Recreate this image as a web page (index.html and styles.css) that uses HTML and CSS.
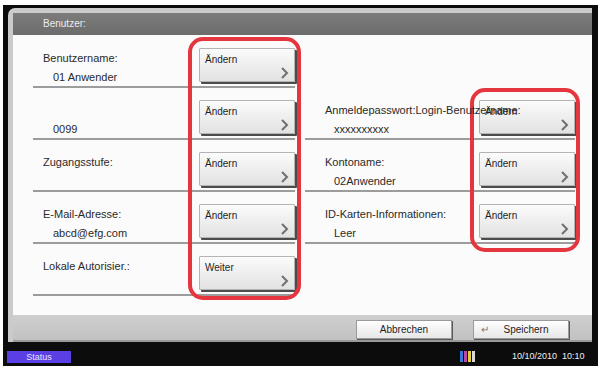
FILE: index.html
```html
<!DOCTYPE html>
<html>
<head>
    <title>Benutzer</title>
<link rel="stylesheet" href="styles.css">
</head>
<body>
<div class="screen">
    <div class="panel">
        <div class="title">Benutzer:</div>
        <div class="content">
            <div class="grid">
                <div class="col col-left">
                    <div class="row">
                        <div class="info">
                            <div class="label">Benutzername:</div>
                            <div class="value">01 Anwender</div>
                        </div>
                        <button class="btn"><span>Ändern</span><svg width="9" height="12" viewBox="0 0 9 12"><path d="M2 1 L7 6 L2 11" fill="none" stroke="#707070" stroke-width="2"/></svg></button>
                    </div>
                    <div class="row">
                        <div class="info">
                            <div class="label">&nbsp;</div>
                            <div class="value">0099</div>
                        </div>
                        <button class="btn"><span>Ändern</span><svg width="9" height="12" viewBox="0 0 9 12"><path d="M2 1 L7 6 L2 11" fill="none" stroke="#707070" stroke-width="2"/></svg></button>
                    </div>
                    <div class="row">
                        <div class="info">
                            <div class="label">Zugangsstufe:</div>
                        </div>
                        <button class="btn"><span>Ändern</span><svg width="9" height="12" viewBox="0 0 9 12"><path d="M2 1 L7 6 L2 11" fill="none" stroke="#707070" stroke-width="2"/></svg></button>
                    </div>
                    <div class="row">
                        <div class="info">
                            <div class="label">E-Mail-Adresse:</div>
                            <div class="value">abcd@efg.com</div>
                        </div>
                        <button class="btn"><span>Ändern</span><svg width="9" height="12" viewBox="0 0 9 12"><path d="M2 1 L7 6 L2 11" fill="none" stroke="#707070" stroke-width="2"/></svg></button>
                    </div>
                    <div class="row">
                        <div class="info">
                            <div class="label">Lokale Autorisier.:</div>
                        </div>
                        <button class="btn"><span>Weiter</span><svg width="9" height="12" viewBox="0 0 9 12"><path d="M2 1 L7 6 L2 11" fill="none" stroke="#707070" stroke-width="2"/></svg></button>
                    </div>
                </div>
                <div class="col col-right">
                    <div class="row row-empty"></div>
                    <div class="row">
                        <div class="info">
                            <div class="label over">Anmeldepasswort:Login-Benutzername:</div>
                            <div class="value">xxxxxxxxxx</div>
                        </div>
                        <button class="btn"><span>Ändern</span><svg width="9" height="12" viewBox="0 0 9 12"><path d="M2 1 L7 6 L2 11" fill="none" stroke="#707070" stroke-width="2"/></svg></button>
                    </div>
                    <div class="row">
                        <div class="info">
                            <div class="label">Kontoname:</div>
                            <div class="value">02Anwender</div>
                        </div>
                        <button class="btn"><span>Ändern</span><svg width="9" height="12" viewBox="0 0 9 12"><path d="M2 1 L7 6 L2 11" fill="none" stroke="#707070" stroke-width="2"/></svg></button>
                    </div>
                    <div class="row">
                        <div class="info">
                            <div class="label">ID-Karten-Informationen:</div>
                            <div class="value">Leer</div>
                        </div>
                        <button class="btn"><span>Ändern</span><svg width="9" height="12" viewBox="0 0 9 12"><path d="M2 1 L7 6 L2 11" fill="none" stroke="#707070" stroke-width="2"/></svg></button>
                    </div>
                </div>
            </div>
            <div class="mark mark-left"></div>
            <div class="mark mark-right"></div>
        </div>
        <div class="footer">
            <button class="fbtn">Abbrechen</button>
            <button class="fbtn"><span class="enter">&#8629;</span>Speichern</button>
        </div>
    </div>
    <div class="statusbar">
        <div class="status">Status</div>
        <div class="toner">
            <i class="t-c"></i><i class="t-m"></i><i class="t-y"></i><i class="t-k"></i>
        </div>
        <div class="clock">10/10/2010&nbsp; 10:10</div>
    </div>
</div>
</body>
</html>
```

FILE: styles.css
```css
body {
  margin: 0;
  background: #ffffff;
  font-family: "Liberation Sans", Arial, sans-serif;
}

.screen {
  margin: 5px 6px 0 3px;
  height: 361px;
  background: #0c0c0c;
  display: flex;
  flex-direction: column;
}

.panel {
  margin: 3px 6px 0 5px;
  height: 334px;
  background: #cbcbcb;
  border-radius: 7px 0 0 0;
  padding: 5px 0 0 5px;
  box-sizing: border-box;
  display: flex;
  flex-direction: column;
}

.title {
  height: 22px;
  background: linear-gradient(#7c7c7c, #6c6c6c);
  color: #ececec;
  font-size: 10px;
  line-height: 22px;
  padding-left: 30px;
}

.content {
  position: relative;
  height: 280px;
  background: #fbfbfb;
  padding-top: 1px;
  box-sizing: border-box;
}

.grid {
  display: grid;
  grid-template-columns: 262px 270px;
  column-gap: 10px;
  padding-left: 20px;
}

.row {
  height: 50px;
  border-bottom: 2px solid #9c9c9c;
  display: flex;
  justify-content: space-between;
  align-items: flex-start;
  padding-left: 10px;
}

.col-right .row {
  padding-left: 20px;
}

.row-empty {
  border-bottom-color: transparent;
}

.info {
  flex: 1;
  min-width: 0;
  padding-top: 15px;
  color: #2a2a2a;
  font-size: 11px;
  line-height: 14px;
}

.label {
  white-space: nowrap;
}

.label.over {
  position: relative;
  z-index: 1;
}

.value {
  margin-top: 5px;
  padding-left: 10px;
}

.col-right .value {
  padding-left: 9px;
}

.btn {
  width: 96px;
  height: 34px;
  margin-top: 12px;
  flex: none;
  box-sizing: border-box;
  border: 1px solid #b4b4b4;
  border-radius: 1px;
  background: linear-gradient(#fbfbfb, #e2e2e2);
  box-shadow: 2px 2px 0 #4c4c4c;
  padding: 5px 5px 2px 5px;
  display: flex;
  flex-direction: column;
  justify-content: space-between;
  font-family: "Liberation Sans", Arial, sans-serif;
  font-size: 10px;
  line-height: 12px;
  color: #1e1e1e;
  text-align: left;
}

.btn span {
  align-self: flex-start;
}

.btn svg {
  align-self: flex-end;
}

.mark {
  position: absolute;
  border: 4px solid #e5363f;
  border-radius: 15px;
  box-sizing: border-box;
}

.mark-left {
  left: 175px;
  top: 2px;
  width: 113px;
  height: 263px;
}

.mark-right {
  left: 457px;
  top: 53px;
  width: 110px;
  height: 164px;
}

.footer {
  height: 27px;
  box-sizing: border-box;
  background: linear-gradient(#cfcfcf, #c2c2c2);
  border-bottom: 2px solid #9a9a9a;
  display: flex;
  justify-content: flex-end;
  gap: 21px;
  padding: 5px 23px 0 0;
}

.fbtn {
  width: 96px;
  height: 19px;
  box-sizing: border-box;
  border: 1px solid #9a9a9a;
  background: linear-gradient(#ffffff, #e6e6e6);
  box-shadow: 1px 1px 0 #5a5a5a;
  font-family: "Liberation Sans", Arial, sans-serif;
  font-size: 10px;
  color: #1e1e1e;
  padding: 0;
  display: flex;
  align-items: center;
  justify-content: center;
}

.enter {
  color: #777777;
  font-size: 10px;
  margin-right: 14px;
  margin-left: -12px;
}

.statusbar {
  flex: 1;
  display: flex;
  align-items: flex-start;
  padding: 9px 0 0 4px;
  color: #f0f0f0;
  font-size: 9px;
}

.status {
  width: 64px;
  height: 12px;
  line-height: 12px;
  text-align: center;
  background: #5b3ee4;
  color: #e8e4ff;
}

.toner {
  margin-left: 389px;
  display: flex;
  align-items: flex-end;
  gap: 1px;
  height: 11px;
  margin-top: 0;
}

.toner i {
  display: block;
  width: 3px;
  height: 11px;
}

.t-c { background: #3a78d8; }
.t-m { background: #b84aa8; }
.t-y { background: #e6cf3a; }
.t-k { background: #d8d8d8; }

.clock {
  margin-left: 37px;
  line-height: 11px;
}
```
